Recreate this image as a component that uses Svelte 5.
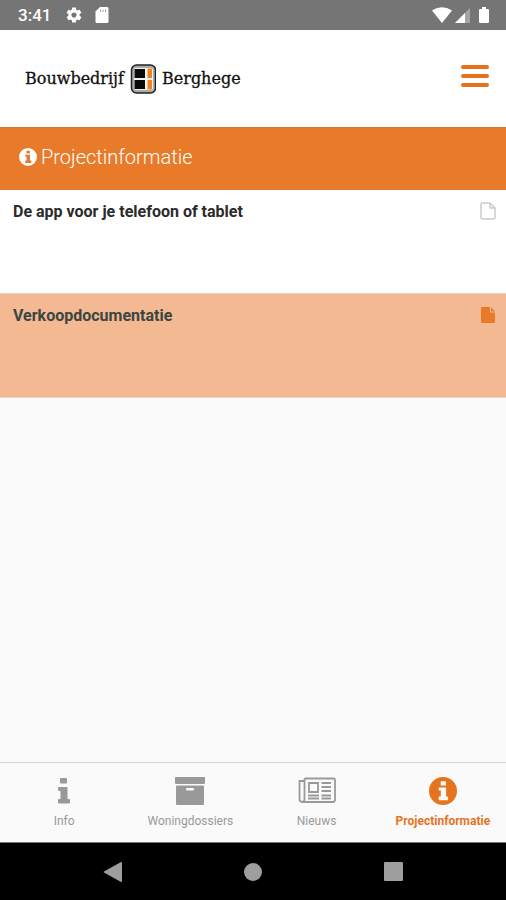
<script>
  const documents = [
    { title: 'De app voor je telefoon of tablet', selected: false },
    { title: 'Verkoopdocumentatie', selected: true }
  ];
  const tabs = [
    { id: 'info', label: 'Info' },
    { id: 'dossiers', label: 'Woningdossiers' },
    { id: 'news', label: 'Nieuws' },
    { id: 'project', label: 'Projectinformatie' }
  ];
  let active = $state('project');
</script>

{#snippet infoCircle(size)}
  <svg width={size} height={size} viewBox="0 0 28 28" aria-hidden="true">
    <path
      fill="currentColor"
      fill-rule="evenodd"
      d="M14 0a14 14 0 1 0 0 28a14 14 0 1 0 0-28zM12.2 4.2h4.300q.5 0 .5.5v3.400q0 .5-.5.5h-4.300q-.5 0-.5-.5v-3.400q0-.5.5-.5zM10.200 10.400h6.400q.5 0 .5.5v8.700h1.500q.5 0 .5.5v2.700q0 .5-.5.5h-8.400q-.5 0-.5-.5v-2.700q0-.5.5-.5h1.600v-6h-1.600q-.5 0-.5-.5v-2.200q0-.5.5-.5z"
    />
  </svg>
{/snippet}

<div class="screen">
  <div class="status">
    <div class="group">
      <span class="time">3:41</span>
      <svg width="18" height="18" viewBox="0 0 24 24" aria-hidden="true">
        <path
          fill="#fff"
          d="M19.43 12.98c.04-.32.07-.64.07-.98s-.03-.66-.07-.98l2.11-1.65c.19-.15.24-.42.12-.64l-2-3.46c-.12-.22-.39-.3-.61-.22l-2.49 1c-.52-.4-1.08-.73-1.69-.98l-.38-2.65C14.46 2.18 14.25 2 14 2h-4c-.25 0-.46.18-.49.42l-.38 2.65c-.61.25-1.17.59-1.69.98l-2.49-1c-.23-.09-.49 0-.61.22l-2 3.46c-.13.22-.07.49.12.64l2.11 1.65c-.04.32-.07.65-.07.98s.03.66.07.98l-2.11 1.65c-.19.15-.24.42-.12.64l2 3.46c.12.22.39.3.61.22l2.49-1c.52.4 1.08.73 1.69.98l.38 2.65c.03.24.24.42.49.42h4c.25 0 .46-.18.49-.42l.38-2.65c.61-.25 1.17-.59 1.69-.98l2.49 1c.23.09.49 0 .61-.22l2-3.46c.12-.22.07-.49-.12-.64l-2.11-1.65zM12 15.5c-1.93 0-3.5-1.57-3.5-3.5s1.57-3.5 3.5-3.5 3.5 1.57 3.5 3.5-1.57 3.5-3.5 3.5z"
        />
      </svg>
      <svg width="14" height="16" viewBox="0 0 14 16" aria-hidden="true">
        <path fill="#fff" d="M5 0h7q1.500 0 1.500 1.500v13q0 1.500-1.500 1.500H2q-1.500 0-1.500-1.500V4.500z" />
        <path stroke="#757575" stroke-opacity=".7" d="M5.500 2.500v2.500M8 2.500v2.500M10.500 2.500v2.500" />
      </svg>
    </div>
    <div class="group signals">
      <svg width="20" height="16" viewBox="0 0 20 16" aria-hidden="true">
        <path fill="#fff" d="M0 3.500Q10-3 20 3.500L10 16z" />
      </svg>
      <svg width="15" height="16" viewBox="0 0 15 16" aria-hidden="true">
        <path fill="#fff" fill-opacity=".35" d="M15 1v15H0z" />
        <path fill="#fff" d="M10 6v10H0z" />
      </svg>
      <svg class="battery" width="12" height="18" viewBox="0 0 12 18" aria-hidden="true">
        <path fill="#fff" d="M4 1h4v2h2q1 0 1 1v12q0 1-1 1H2q-1 0-1-1V4q0-1 1-1h2z" />
      </svg>
    </div>
  </div>

  <header>
    <a class="brand" href="#home">
      <span>Bouwbedrijf</span>
      <svg width="26" height="30" viewBox="0 0 26 30" aria-hidden="true">
        <rect x="1.500" y="1" width="24" height="28" rx="5" fill="#aaa" stroke="#222" stroke-width="1.500" />
        <rect x="4" y="4" width="19" height="22" rx="2" fill="#f4f4f4" />
        <path fill="#0a0a0a" d="M4.500 5h10.500v9H4.500zM4.500 16h10.500v9H4.500z" />
        <path fill="#f58220" d="M17.500 4.500h4.500v9.500h-4.500zM17.500 16h4.500v9.500h-4.500z" />
      </svg>
      <span>Berghege</span>
    </a>
    <button class="menu" aria-label="Menu">
      <svg width="28" height="24" viewBox="0 0 28 24" aria-hidden="true">
        <path stroke="#e5711a" stroke-width="4" stroke-linecap="round" d="M2 3h24M2 12h24M2 21h24" />
      </svg>
    </button>
  </header>

  <h1>
    {@render infoCircle(18)}
    <span>Projectinformatie</span>
  </h1>

  <main>
    {#each documents as doc}
      <a class="document" class:selected={doc.selected} href="#document">
        <span>{doc.title}</span>
        <svg width="16" height="18" viewBox="0 0 16 18" aria-hidden="true">
          {#if doc.selected}
            <path fill="currentColor" d="M2 1h8v5.500h5V16q0 1-1 1H2q-1 0-1-1V2q0-1 1-1zM11 1l4 4.500h-4z" />
          {:else}
            <path
              fill="none"
              stroke="currentColor"
              stroke-width="1.500"
              stroke-linejoin="round"
              d="M2.500 1H10l5 5v9.500q0 1.500-1.500 1.500h-11Q1 17 1 15.500v-13Q1 1 2.500 1zM10 1v5h5"
            />
          {/if}
        </svg>
      </a>
    {/each}
  </main>

  <nav class="tabs">
    {#each tabs as tab}
      <button class:active={active === tab.id} onclick={() => (active = tab.id)}>
        {#if tab.id === 'info'}
          <svg width="14" height="28" viewBox="0 0 14 28" aria-hidden="true">
            <path
              fill="currentColor"
              d="M4 1h5q1 0 1 1v3.500q0 1-1 1H4q-1 0-1-1V2q0-1 1-1zM2 10h7.500q1 0 1 1v11H12q1 0 1 1v2.500q0 1-1 1H2q-1 0-1-1V23q0-1 1-1h1.500v-8H2q-1 0-1-1v-2q0-1 1-1z"
            />
          </svg>
        {:else if tab.id === 'dossiers'}
          <svg width="30" height="28" viewBox="0 0 30 28" aria-hidden="true">
            <path
              fill="currentColor"
              fill-rule="evenodd"
              d="M1 0h28q1 0 1 1v5q0 1-1 1H1Q0 7 0 6V1q0-1 1-1zM2 8.500h26q1 0 1 1V27q0 1-1 1H2q-1 0-1-1V9.500q0-1 1-1zM12 11q-1 0-1 1.200t1 1.200h6q1 0 1-1.200t-1-1.200z"
            />
          </svg>
        {:else if tab.id === 'news'}
          <svg width="38" height="28" viewBox="0 0 38 28" aria-hidden="true">
            <g fill="none" stroke="currentColor" stroke-width="1.800">
              <path d="M6.500 1.500h29q1.500 0 1.500 1.500v19.500q0 2.500-2.500 2.500h-31M6.500 1.500v20.500q0 3-2.500 3T1.500 22V4h5" />
              <path d="M11 6h9v9h-9zM10 18.500h11M10 21.500h11M23.500 6H33M23.500 10H33M23.500 14H33M23.500 18.500H33M23.500 21.500H33" />
            </g>
          </svg>
        {:else}
          {@render infoCircle(28)}
        {/if}
        <span>{tab.label}</span>
      </button>
    {/each}
  </nav>

  <div class="system">
    <button aria-label="Terug">
      <svg width="20" height="20" viewBox="0 0 20 20"><path fill="#9e9e9e" d="M18 0q1 0 1 1v18q0 1-1 1L1 10.500q-1-.5 0-1z" /></svg>
    </button>
    <button aria-label="Start">
      <svg width="20" height="20" viewBox="0 0 20 20"><circle cx="10" cy="10" r="9" fill="#9e9e9e" /></svg>
    </button>
    <button aria-label="Overzicht">
      <svg width="20" height="20" viewBox="0 0 20 20"><rect width="19" height="19" x="1" rx="1" fill="#9e9e9e" /></svg>
    </button>
  </div>
</div>

<style>
  :global(body) {
    margin: 0;
    background: #fafafa;
  }
  .screen {
    display: flex;
    flex-direction: column;
    min-height: 100vh;
    font-family: Roboto, 'Liberation Sans', sans-serif;
    color: #2b2b2b;
  }
  svg {
    display: block;
    flex: none;
  }
  button {
    margin: 0;
    padding: 0;
    border: 0;
    background: none;
    font: inherit;
    color: inherit;
    cursor: pointer;
  }
  a {
    color: inherit;
    text-decoration: none;
  }
  .status {
    display: flex;
    justify-content: space-between;
    align-items: center;
    height: 30px;
    padding: 0 16px 0 18px;
    background: #757575;
    color: #fff;
  }
  .group {
    display: flex;
    align-items: center;
    gap: 12px;
  }
  .signals {
    gap: 3px;
  }
  .battery {
    margin-left: 5px;
  }
  .time {
    font-size: 17px;
    font-weight: 500;
    line-height: 20px;
    margin-right: 2px;
  }
  header {
    display: flex;
    justify-content: space-between;
    align-items: center;
    height: 97px;
    padding: 0 17px 0 25px;
    background: #fff;
  }
  .brand {
    display: flex;
    align-items: center;
    gap: 6px;
    font-family: 'DejaVu Serif', serif;
    font-size: 16px;
    line-height: 20px;
    color: #111;
    -webkit-text-stroke: 0.3px #111;
  }
  .menu {
    margin-bottom: 5px;
  }
  h1 {
    display: flex;
    align-items: flex-start;
    gap: 4px;
    box-sizing: border-box;
    height: 63px;
    margin: 0;
    padding: 17px 19px;
    border-top: 1px solid #d27a3c;
    background: #e87a29;
    color: #fff;
    font-size: 20px;
    font-weight: 300;
    line-height: 24px;
  }
  h1 :global(svg) {
    margin-top: 3px;
  }
  main {
    flex: 1;
  }
  .document {
    display: flex;
    justify-content: space-between;
    align-items: flex-start;
    box-sizing: border-box;
    height: 104px;
    padding: 12px 10px 12px 13px;
    border-bottom: 1px solid #e8d4c8;
    background: #fff;
    font-size: 16px;
    font-weight: 700;
    line-height: 20px;
  }
  .document svg {
    color: #ccc;
  }
  .document.selected {
    background: #f3b993;
    color: #3c4540;
  }
  .document.selected svg {
    color: #e87a29;
  }
  .tabs {
    display: flex;
    height: 79px;
    padding-left: 1px;
    border-top: 1px solid #d6d6d6;
    border-bottom: 1px solid #777;
    background: #fafafa;
  }
  .tabs button {
    display: flex;
    flex: 1 1 0;
    flex-direction: column;
    align-items: center;
    gap: 8px;
    min-width: 0;
    padding-top: 14px;
    color: #999;
    font-size: 12px;
    line-height: 16px;
  }
  .tabs .active {
    color: #e6741f;
    font-weight: 700;
  }
  .system {
    display: flex;
    justify-content: center;
    align-items: center;
    gap: 120px;
    height: 57px;
    background: #000;
  }
</style>
